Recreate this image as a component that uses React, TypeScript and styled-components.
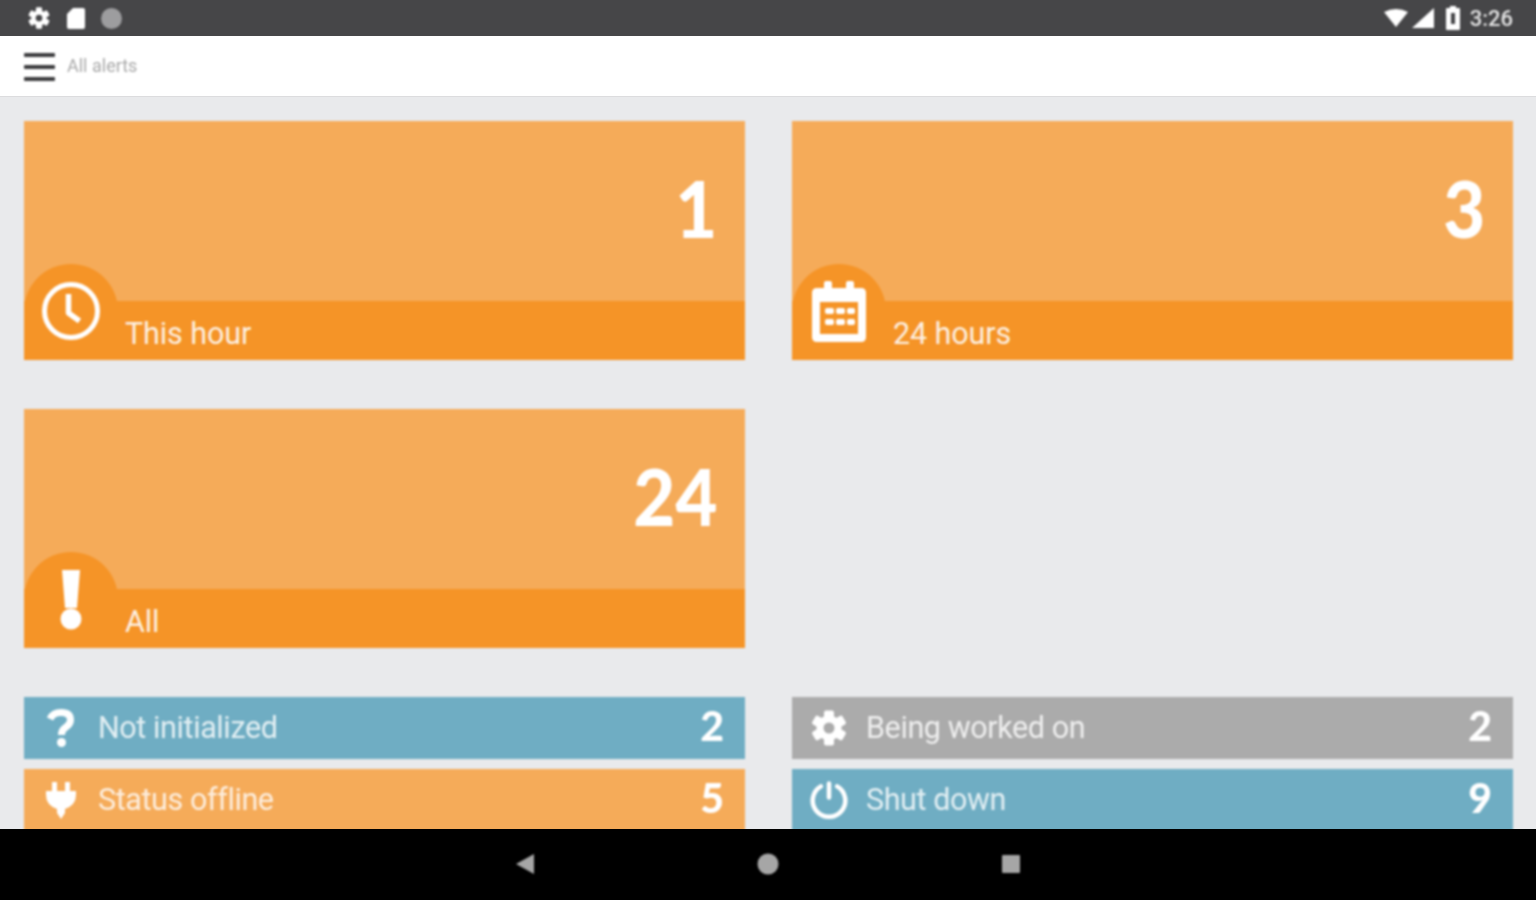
import React from 'react'
import styled, { createGlobalStyle, css } from 'styled-components'

const colors = {
    orangeLight: '#f5ab59',
    orange: '#f59427',
    blue: '#6fadc3',
    gray: '#ababab',
    page: '#e9eaec',
    statusBar: '#464648',
    navIcon: '#a6a6a6',
}

// the reference is an upscaled phone capture, everything in it is a bit soft
const soft = css`
    filter: blur(0.8px);
`

const GlobalStyle = createGlobalStyle`
    html, body {
        margin: 0;
        padding: 0;
        background: #000;
    }
`

const Screen = styled.div`
    width: 1536px;
    height: 900px;
    display: flex;
    flex-direction: column;
    overflow: hidden;
    font-family: Roboto, "Liberation Sans", sans-serif;
    background: ${colors.page};
`

const StatusBar = styled.div`
    height: 36px;
    flex: none;
    display: flex;
    align-items: center;
    justify-content: space-between;
    padding: 0 23px 0 28px;
    background: ${colors.statusBar};
    color: #fff;
`

const StatusGroup = styled.div`
    ${soft}
    display: flex;
    align-items: center;
    gap: 16.5px;
`

const StatusRight = styled(StatusGroup)`
    gap: 4px;
`

const BatterySlot = styled.div`
    display: flex;
    margin: 0 6px 0 8px;
`

const Time = styled.span`
    font-size: 22px;
    font-weight: 500;
    color: #e4e4e4;
`

const AppBar = styled.header`
    height: 60px;
    flex: none;
    display: flex;
    align-items: center;
    gap: 12px;
    padding: 0 24px;
    background: #fff;
    border-bottom: 1px solid #dcdcde;
`

const MenuButton = styled.div`
    ${soft}
    width: 31px;
    display: flex;
    flex-direction: column;
    gap: 8px;
    margin-top: 2px;
    span {
        height: 4px;
        border-radius: 1px;
        background: #3c3c3e;
    }
`

const Title = styled.h1`
    ${soft}
    margin: 0 0 2px;
    font-size: 18px;
    font-weight: 400;
    color: #a9a9a9;
`

const Content = styled.main`
    flex: 1;
    min-height: 0;
    overflow: hidden;
    padding: 24px 23px 0 24px;
`

const TileGrid = styled.section`
    ${soft}
    display: grid;
    grid-template-columns: 721px 721px;
    grid-auto-rows: 239px;
    column-gap: 47px;
    row-gap: 49px;
`

const Tile = styled.article`
    position: relative;
    display: flex;
    flex-direction: column;
    overflow: hidden;
    background: ${colors.orangeLight};
`

const TileTop = styled.div`
    flex: 1;
    display: flex;
    justify-content: flex-end;
    padding: 37px 28px 0 0;
`

const TileCount = styled.span`
    font-family: Lato, sans-serif;
    font-size: 78px;
    font-weight: 900;
    line-height: 100px;
    color: #fff;
    transform: scaleX(0.93);
    transform-origin: right center;
`

const TileBand = styled.div`
    height: 59px;
    flex: none;
    display: flex;
    align-items: center;
    padding: 6px 0 0 101px;
    box-sizing: border-box;
    background: ${colors.orange};
`

const TileLabel = styled.span`
    font-size: 30.5px;
    letter-spacing: -0.1px;
    color: rgba(255, 255, 255, 0.88);
`

const TileBadge = styled.div`
    position: absolute;
    left: 0;
    top: 143px;
    width: 94px;
    height: 94px;
    border-radius: 50%;
    display: flex;
    align-items: center;
    justify-content: center;
    background: ${colors.orange};
`

const StatGrid = styled.section`
    ${soft}
    display: grid;
    grid-template-columns: 721px 721px;
    grid-auto-rows: 62px;
    column-gap: 47px;
    row-gap: 10px;
    margin-top: 49px;
`

const Stat = styled.div<{ $bg: string }>`
    display: flex;
    align-items: center;
    background: ${({ $bg }) => $bg};
    color: rgba(255, 255, 255, 0.8);
`

const StatIcon = styled.div`
    width: 74px;
    flex: none;
    display: flex;
    justify-content: center;
`

const StatLabel = styled.span`
    flex: 1;
    font-size: 30.5px;
    letter-spacing: -0.4px;
    padding-bottom: 2px;
`

const StatCount = styled.span`
    font-family: Lato, sans-serif;
    font-size: 41px;
    font-weight: 900;
    color: #fff;
    padding: 0 21px 5px 0;
`

const NavBar = styled.nav`
    height: 71px;
    flex: none;
    box-sizing: border-box;
    display: flex;
    align-items: center;
    justify-content: center;
    gap: 222px;
    padding-bottom: 2px;
    background: #000;
    svg {
        ${soft}
    }
`

const ClockIcon = () => (
    <svg width="62" height="62" viewBox="0 0 62 62" fill="none" stroke="#fff" strokeWidth="5">
        <circle cx="31" cy="31" r="26.5" />
        <path d="M28.500 14v19l11 8" strokeWidth="5.500" strokeLinejoin="round" />
    </svg>
)

const CalendarIcon = () => (
    <svg width="54" height="62" viewBox="0 -1 54 62" fill="#fff">
        <path fillRule="evenodd" d="M5 7h7V2q0-2 2-2h4q2 0 2 2v5h14V2q0-2 2-2h4q2 0 2 2v5h7q5 0 5 5v44q0 5-5 5H5q-5 0-5-5V12q0-5 5-5zm3 14v32h38V21z" />
        <rect x="13" y="27" width="9" height="6" rx="2" />
        <rect x="24" y="27" width="9" height="6" rx="2" />
        <rect x="35" y="27" width="8" height="6" rx="2" />
        <rect x="13" y="38" width="9" height="6" rx="2" />
        <rect x="24" y="38" width="9" height="6" rx="2" />
        <rect x="35" y="38" width="8" height="6" rx="2" />
    </svg>
)

const AlertIcon = () => (
    <svg width="24" height="62" viewBox="0 0 24 62" fill="#fff">
        <path d="M3 2h18l-3 38H6z" />
        <circle cx="12" cy="51" r="10.500" />
    </svg>
)

const QuestionIcon = () => (
    <svg width="28" height="38" viewBox="0 0 28 38" fill="none">
        <path d="M3 10Q6 3.500 14 3.500 23.500 3.500 23.500 11 23.500 15 18.500 18.500 14.500 21 14.500 26" stroke="#fff" strokeWidth="7" />
        <circle cx="14.500" cy="33.500" r="4.500" fill="#fff" />
    </svg>
)

const PlugIcon = () => (
    <svg width="30" height="38" viewBox="0 0 30 38" fill="#fff">
        <path d="M6 1h5v9h8V1h5v9h6v4q0 10-11 14v4l-4 6-4-6v-4Q0 24 0 14v-4h6z" />
    </svg>
)

const GearIcon = ({ size = 36, hole = 'none' }: { size?: number; hole?: string }) => (
    <svg width={size} height={size} viewBox="0 0 36 36">
        <g fill="#fff">
            <circle cx="18" cy="18" r="12.500" />
            {[0, 60, 120, 180, 240, 300].map((angle) => (
                <rect key={angle} x="13" y="0.500" width="10" height="9" rx="2" transform={`rotate(${angle} 18 18)`} />
            ))}
        </g>
        <circle cx="18" cy="18" r="5.500" fill={hole} />
    </svg>
)

const PowerIcon = () => (
    <svg width="38" height="38" viewBox="0 0 38 38" fill="none" stroke="#fff" strokeWidth="4.500" strokeLinecap="round">
        <path d="M10.850 5.400A16.300 16.300 0 1 0 27.150 5.400" />
        <path d="M19 2.500v14" />
    </svg>
)

const SdIcon = () => (
    <svg width="18" height="21" viewBox="0 0 18 21" fill="#fff">
        <path d="M6 0h10q2 0 2 2v17q0 2-2 2H2q-2 0-2-2V6z" />
    </svg>
)

const Dot = styled.div`
    width: 21px;
    height: 21px;
    border-radius: 50%;
    background: #9d9d9f;
`

const WifiIcon = () => (
    <svg width="24" height="18" viewBox="0 0 24 18" fill="#fff">
        <path d="M0 3Q12-3 24 3L12 18z" />
    </svg>
)

const SignalIcon = () => (
    <svg width="22" height="20" viewBox="0 0 22 20" fill="#fff">
        <path d="M22 0v20H0z" />
    </svg>
)

const BatteryIcon = () => (
    <svg width="14" height="24" viewBox="0 0 14 24" fill="#fff">
        <path fillRule="evenodd" d="M4 0h6v2h3q1 0 1 1v20q0 1-1 1H1q-1 0-1-1V3q0-1 1-1h3zM5 7v11h4V7z" />
    </svg>
)

const BackIcon = () => (
    <svg width="20" height="22" viewBox="0 0 20 22" fill={colors.navIcon}>
        <path d="M19 1v20L1 11z" />
    </svg>
)

const HomeIcon = () => (
    <svg width="22" height="22" viewBox="0 0 22 22" fill={colors.navIcon}>
        <circle cx="11" cy="11" r="10.500" />
    </svg>
)

const RecentIcon = () => (
    <svg width="20" height="20" viewBox="0 0 20 20" fill={colors.navIcon}>
        <rect x="1" y="1" width="18" height="18" rx="1" />
    </svg>
)

const tiles = [
    { label: 'This hour', count: 1, icon: <ClockIcon /> },
    { label: '24 hours', count: 3, icon: <CalendarIcon /> },
    { label: 'All', count: 24, icon: <AlertIcon /> },
]

const stats = [
    { label: 'Not initialized', count: 2, bg: colors.blue, icon: <QuestionIcon /> },
    { label: 'Being worked on', count: 2, bg: colors.gray, icon: <GearIcon hole={colors.gray} /> },
    { label: 'Status offline', count: 5, bg: colors.orangeLight, icon: <PlugIcon /> },
    { label: 'Shut down', count: 9, bg: colors.blue, icon: <PowerIcon /> },
]

const App = () => {
    return (
        <Screen>
            <GlobalStyle />
            <StatusBar>
                <StatusGroup>
                    <GearIcon size={22} hole={colors.statusBar} />
                    <SdIcon />
                    <Dot />
                </StatusGroup>
                <StatusRight>
                    <WifiIcon />
                    <SignalIcon />
                    <BatterySlot>
                        <BatteryIcon />
                    </BatterySlot>
                    <Time>3:26</Time>
                </StatusRight>
            </StatusBar>
            <AppBar>
                <MenuButton>
                    <span />
                    <span />
                    <span />
                </MenuButton>
                <Title>All alerts</Title>
            </AppBar>
            <Content>
                <TileGrid>
                    {tiles.map((tile) => (
                        <Tile key={tile.label}>
                            <TileTop>
                                <TileCount>{tile.count}</TileCount>
                            </TileTop>
                            <TileBand>
                                <TileLabel>{tile.label}</TileLabel>
                            </TileBand>
                            <TileBadge>{tile.icon}</TileBadge>
                        </Tile>
                    ))}
                </TileGrid>
                <StatGrid>
                    {stats.map((stat) => (
                        <Stat key={stat.label} $bg={stat.bg}>
                            <StatIcon>{stat.icon}</StatIcon>
                            <StatLabel>{stat.label}</StatLabel>
                            <StatCount>{stat.count}</StatCount>
                        </Stat>
                    ))}
                </StatGrid>
            </Content>
            <NavBar>
                <BackIcon />
                <HomeIcon />
                <RecentIcon />
            </NavBar>
        </Screen>
    )
}

export default App
